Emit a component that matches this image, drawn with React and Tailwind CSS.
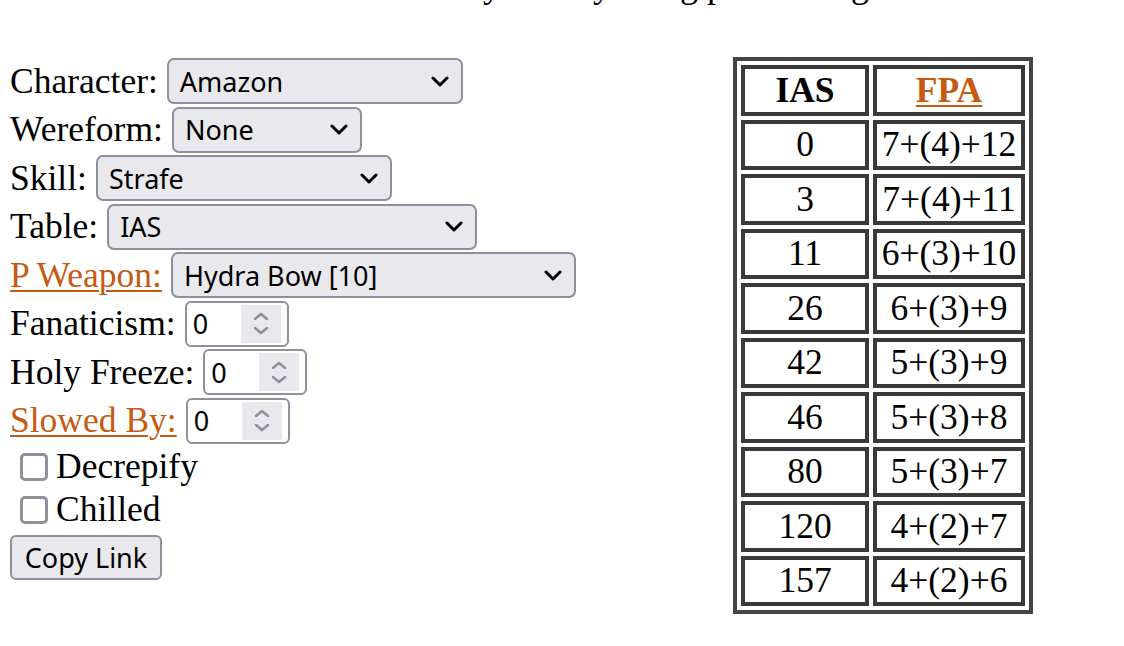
import React from "react";

const serif = "font-['Liberation_Serif','Times_New_Roman',serif]";
const sans = "font-['Noto_Sans','Liberation_Sans',sans-serif]";

const Chevron = () => (
  <svg width="18" height="11" viewBox="0 0 18 11" fill="none">
    <path d="M2 2l7 7 7-7" stroke="#000" strokeWidth="3" strokeLinecap="round" strokeLinejoin="round" />
  </svg>
);

// fake select box in firefox style
const Select = ({ value, width }) => (
  <div
    className={`${sans} flex h-[46px] items-center justify-between rounded-[7px] border-2 border-[#8f8f9d] bg-[#e9e9ed] pl-[11px] pr-[12px] text-[27px] text-black`}
    style={{ width }}
  >
    <span className="leading-none">{value}</span>
    <Chevron />
  </div>
);

const NumberInput = () => (
  <div className="flex h-[46px] w-[104px] items-center justify-between rounded-[6px] border-2 border-[#8f8f9d] bg-white pl-[6px] pr-[6px]">
    <span className={`${sans} text-[27px] leading-none text-black`}>0</span>
    <div className="flex h-[38px] w-[40px] flex-col items-center justify-center gap-[7px] bg-[#e9e9ed]">
      <svg width="16" height="8" viewBox="0 0 16 8" fill="none">
        <path d="M2 7l6-5 6 5" stroke="#8f8f9d" strokeWidth="2.5" strokeLinecap="round" strokeLinejoin="round" />
      </svg>
      <svg width="16" height="8" viewBox="0 0 16 8" fill="none">
        <path d="M2 1l6 5 6-5" stroke="#8f8f9d" strokeWidth="2.5" strokeLinecap="round" strokeLinejoin="round" />
      </svg>
    </div>
  </div>
);

const Row = ({ children }) => (
  <div className="flex h-[48.5px] items-center gap-[9px] whitespace-nowrap">{children}</div>
);

const Link = ({ children }) => (
  <a href="#" className="text-[#c55a11] underline decoration-[2px] underline-offset-[3px]">
    {children}
  </a>
);

const Checkbox = ({ label }) => (
  <div className="flex h-[43px] items-center whitespace-nowrap">
    <span className="ml-[10px] mr-[8px] inline-block h-[28px] w-[28px] rounded-[5px] border-[3px] border-[#8f8f9d] bg-white"></span>
    <span>{label}</span>
  </div>
);

const rows = [
  ["0", "7+(4)+12"],
  ["3", "7+(4)+11"],
  ["11", "6+(3)+10"],
  ["26", "6+(3)+9"],
  ["42", "5+(3)+9"],
  ["46", "5+(3)+8"],
  ["80", "5+(3)+7"],
  ["120", "4+(2)+7"],
  ["157", "4+(2)+6"],
];

const cell = "h-[50.5px] border-[4.5px] border-[#3a3a3a] p-0 text-center whitespace-nowrap";

export default function App() {
  return (
    <div className={`${serif} min-h-[646px] w-[1124px] overflow-hidden bg-white text-black`}>
      {/* heading, mostly scrolled off the top */}
      <div className="h-[10px] overflow-hidden">
        <p className="-mt-[42px] whitespace-nowrap pl-[300px] text-[36px]">
          Choose easily and try using positioning.
        </p>
      </div>

      <div className="mt-[47px] flex items-start">
        {/* form */}
        <div className="w-[733px] shrink-0 pl-[10px] text-[35.5px] leading-none">
          <Row>
            <span>Character:</span>
            <Select value="Amazon" width={296} />
          </Row>
          <Row>
            <span>Wereform:</span>
            <Select value="None" width={190} />
          </Row>
          <Row>
            <span>Skill:</span>
            <Select value="Strafe" width={296} />
          </Row>
          <Row>
            <span>Table:</span>
            <Select value="IAS" width={370} />
          </Row>
          <Row>
            <Link>P Weapon:</Link>
            <Select value="Hydra Bow [10]" width={405} />
          </Row>
          <Row>
            <span>Fanaticism:</span>
            <NumberInput />
          </Row>
          <Row>
            <span>Holy Freeze:</span>
            <NumberInput />
          </Row>
          <Row>
            <Link>Slowed By:</Link>
            <NumberInput />
          </Row>
          <Checkbox label="Decrepify" />
          <Checkbox label="Chilled" />
          <div className="pt-[4px]">
            <button
              className={`${sans} h-[45px] w-[152px] rounded-[6px] border-2 border-[#8f8f9d] bg-[#e9e9ed] text-[27px] leading-none text-black`}
            >
              Copy Link
            </button>
          </div>
        </div>

        {/* table */}
        <table className="border-separate border-spacing-[4.5px] border-4 border-[#444] text-[35.5px] leading-none">
          <thead>
            <tr>
              <th className={`${cell} w-[128px] font-bold`}>IAS</th>
              <th className={`${cell} w-[152px] font-bold`}>
                <a href="#" className="text-[#c55a11] underline decoration-[2px] underline-offset-[3px]">
                  FPA
                </a>
              </th>
            </tr>
          </thead>
          <tbody>
            {rows.map(([ias, fpa]) => (
              <tr key={ias}>
                <td className={cell}>{ias}</td>
                <td className={cell}>{fpa}</td>
              </tr>
            ))}
          </tbody>
        </table>
      </div>
    </div>
  );
}
